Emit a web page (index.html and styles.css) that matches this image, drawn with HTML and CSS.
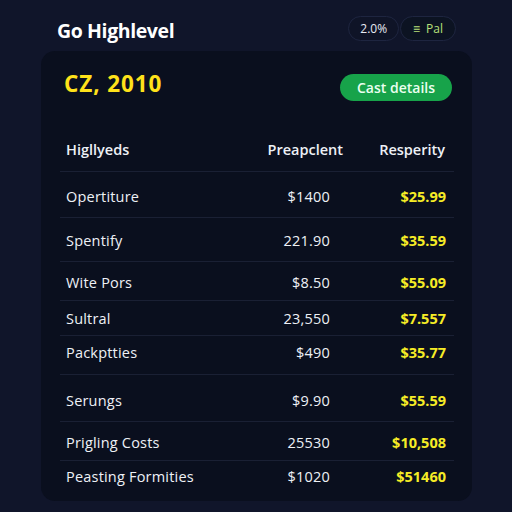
FILE: index.html
```html
<!DOCTYPE html>
<html>
<head>
<meta charset="utf-8">
<link rel="stylesheet" href="styles.css">
</head>
<body>
<div class="page">
  <header class="top">
    <h1 class="brand">Go Highlevel</h1>
    <div class="pills">
      <span class="pill">2.0%</span>
      <span class="pill pill-green"><span class="pill-icon">&#8801;</span> Pal</span>
    </div>
  </header>
  <section class="card">
    <div class="card-head">
      <h2 class="period">CZ, 2010</h2>
      <button class="btn">Cast details</button>
    </div>
    <div class="table">
      <div class="row head">
        <span class="c1">Higllyeds</span><span class="c2">Preapclent</span><span class="c3">Resperity</span>
      </div>
      <div class="row r1"><span class="c1">Opertiture</span><span class="c2">$1400</span><span class="c3">$25.99</span></div>
      <div class="row r2"><span class="c1">Spentify</span><span class="c2">221.90</span><span class="c3">$35.59</span></div>
      <div class="row r3"><span class="c1">Wite Pors</span><span class="c2">$8.50</span><span class="c3">$55.09</span></div>
      <div class="row r4"><span class="c1">Sultral</span><span class="c2">23,550</span><span class="c3">$7.557</span></div>
      <div class="row r5"><span class="c1">Packptties</span><span class="c2">$490</span><span class="c3">$35.77</span></div>
      <div class="row r6"><span class="c1">Serungs</span><span class="c2">$9.90</span><span class="c3">$55.59</span></div>
      <div class="row r7"><span class="c1">Prigling Costs</span><span class="c2">25530</span><span class="c3">$10,508</span></div>
      <div class="row r8 last"><span class="c1">Peasting Formities</span><span class="c2">$1020</span><span class="c3">$51460</span></div>
    </div>
  </section>
</div>
</body>
</html>
```
FILE: styles.css
```css
* { box-sizing: border-box; }
html, body { margin: 0; padding: 0; }
body {
  width: 512px;
  height: 512px;
  overflow: hidden;
  background: #10152a;
  font-family: "Open Sans", "Liberation Sans", sans-serif;
  color: #eef1f6;
}
.page {
  display: flex;
  flex-direction: column;
  padding: 16px 40px 0 41px;
}
.top {
  display: flex;
  justify-content: space-between;
  align-items: center;
  height: 24px;
  padding: 0 16px 0 16px;
}
.brand {
  margin: 0;
  font-size: 19.5px;
  font-weight: 700;
  letter-spacing: -0.4px;
  color: #ffffff;
  position: relative;
  top: 2px;
}
.pills { display: flex; gap: 1px; }
.pill {
  display: inline-flex;
  align-items: center;
  height: 25px;
  padding: 0 11px;
  border-radius: 13px;
  border: 1px solid #1e2540;
  background: #0f1427;
  font-size: 12px;
  color: #e7eaf2;
}
.pill-green { color: #b8e07a; background: #0c1322; padding: 0 12px; gap: 6px; }
.pill-icon { font-size: 12px; }
.card {
  margin-top: 11px;
  height: 450px;
  background: #0a0f1e;
  border-radius: 14px;
  padding: 22px 18px 0 19px;
}
.card-head {
  display: flex;
  justify-content: space-between;
  align-items: center;
  padding: 0 2px 0 4px;
  height: 28px;
}
.period {
  margin: 0;
  align-self: flex-start;
  font-size: 22.5px;
  line-height: 22px;
  font-weight: 700;
  color: #ffe21a;
  letter-spacing: 0.9px;
}
.btn {
  height: 27px;
  padding: 0 14px;
  border: none;
  border-radius: 14px;
  background: #17a34a;
  color: #eafff0;
  font-family: inherit;
  font-size: 14px;
  font-weight: 600;
  width: 112px;
}
.table { margin-top: 27px; display: flex; flex-direction: column; }
.row {
  display: grid;
  grid-template-columns: 1fr 110px 116px;
  align-items: center;
  padding: 0 8px 0 6px;
  border-bottom: 1px solid #1a2034;
  font-size: 14.5px;
  letter-spacing: 0.2px;
  color: #eef1f6;
}
.row .c2, .row .c3 { text-align: right; }
.row .c3 { color: #f6ec26; font-weight: 700; letter-spacing: 0; }
.row.head { height: 44px; font-weight: 600; font-size: 14.5px; letter-spacing: 0; }
.row.head .c2 { margin-right: -13px; }
.row.head .c3 { color: #eef1f6; font-weight: 600; margin-right: 1px; }
.r1 { height: 46px; padding-top: 4px; }
.r2 { height: 44px; padding-top: 2px; }
.r3 { height: 39px; padding-top: 2px; }
.r4 { height: 35px; }
.r5 { height: 39px; padding-bottom: 5px; }
.r6 { height: 47px; padding-top: 5px; }
.r7 { height: 39px; padding-top: 3px; }
.r8 { height: 34px; padding-bottom: 4px; border-bottom: none; }
```
